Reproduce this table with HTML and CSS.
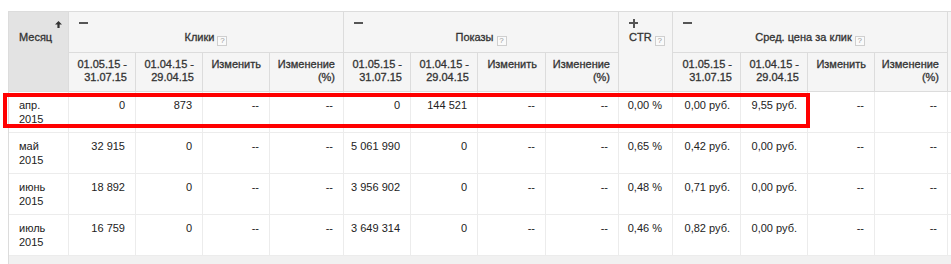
FILE: index.html
```html
<!DOCTYPE html>
<html lang="ru">
<head>
<meta charset="utf-8">
<title>Статистика по месяцам</title>
<link rel="stylesheet" href="styles.css">
</head>
<body>
<div class="wrap">
  <div class="grid">
    <div class="h h-month sorted">
      <svg class="arrow" width="7" height="7" viewBox="0 0 7 7"><path d="M3.5 0 L7 3.6 H4.6 V7 H2.4 V3.6 H0 Z" fill="#333"/></svg>
      <span class="month-label">Месяц</span>
    </div>
    <div class="h h-group g4">
      <span class="tog minus"></span>
      <span class="glabel">Клики<span class="help">?</span></span>
    </div>
    <div class="h h-group g4">
      <span class="tog minus"></span>
      <span class="glabel">Показы<span class="help">?</span></span>
    </div>
    <div class="h h-ctr">
      <span class="tog plus"></span>
      <span class="clabel">CTR<span class="help">?</span></span>
    </div>
    <div class="h h-group g4">
      <span class="tog minus"></span>
      <span class="glabel">Сред. цена за клик<span class="help">?</span></span>
    </div>
    <div class="h h-extra"></div>

    <div class="h sub">01.05.15 - 31.07.15</div>
    <div class="h sub">01.04.15 - 29.04.15</div>
    <div class="h sub">Изменить</div>
    <div class="h sub">Изменение (%)</div>
    <div class="h sub">01.05.15 - 31.07.15</div>
    <div class="h sub">01.04.15 - 29.04.15</div>
    <div class="h sub">Изменить</div>
    <div class="h sub">Изменение (%)</div>
    <div class="h sub">01.05.15 - 31.07.15</div>
    <div class="h sub">01.04.15 - 29.04.15</div>
    <div class="h sub">Изменить</div>
    <div class="h sub">Изменение (%)</div>

    <div class="d m">апр. 2015</div>
    <div class="d">0</div><div class="d">873</div><div class="d">--</div><div class="d">--</div>
    <div class="d">0</div><div class="d">144 521</div><div class="d">--</div><div class="d">--</div>
    <div class="d">0,00 %</div>
    <div class="d">0,00 руб.</div><div class="d">9,55 руб.</div><div class="d">--</div><div class="d">--</div>
    <div class="d x"></div>

    <div class="d m">май 2015</div>
    <div class="d">32 915</div><div class="d">0</div><div class="d">--</div><div class="d">--</div>
    <div class="d">5 061 990</div><div class="d">0</div><div class="d">--</div><div class="d">--</div>
    <div class="d">0,65 %</div>
    <div class="d">0,42 руб.</div><div class="d">0,00 руб.</div><div class="d">--</div><div class="d">--</div>
    <div class="d x"></div>

    <div class="d m">июнь 2015</div>
    <div class="d">18 892</div><div class="d">0</div><div class="d">--</div><div class="d">--</div>
    <div class="d">3 956 902</div><div class="d">0</div><div class="d">--</div><div class="d">--</div>
    <div class="d">0,48 %</div>
    <div class="d">0,71 руб.</div><div class="d">0,00 руб.</div><div class="d">--</div><div class="d">--</div>
    <div class="d x"></div>

    <div class="d m">июль 2015</div>
    <div class="d">16 759</div><div class="d">0</div><div class="d">--</div><div class="d">--</div>
    <div class="d">3 649 314</div><div class="d">0</div><div class="d">--</div><div class="d">--</div>
    <div class="d">0,46 %</div>
    <div class="d">0,82 руб.</div><div class="d">0,00 руб.</div><div class="d">--</div><div class="d">--</div>
    <div class="d x"></div>
  </div>
  <div class="footer"></div>
  <div class="highlight"></div>
</div>
</body>
</html>
```

FILE: styles.css
```css
html, body {
  margin: 0;
  padding: 0;
  background: #fff;
  overflow: hidden;
}
body {
  font-family: "Liberation Sans", Arial, sans-serif;
  font-size: 11px;
  color: #222;
}
.wrap {
  position: relative;
  padding: 11px 0 0 8px;
  width: 1100px;
}
.grid {
  display: grid;
  grid-template-columns: 60px 67px 67px 67px 74px 67px 67px 68px 73px 54px 68px 67px 67px 73px 80px;
  grid-template-rows: 41px 39px 41px 41px 41px 41px;
  border-top: 1px solid #dcdcdc;
  border-left: 1px solid #dcdcdc;
  width: max-content;
}
.grid > div {
  box-sizing: border-box;
  border-right: 1px solid #dcdcdc;
  border-bottom: 1px solid #dcdcdc;
}
.h {
  background: #f5f5f5;
  color: #333;
  font-weight: normal;
  -webkit-text-stroke: 0.3px #333;
  line-height: 13px;
}
.sorted {
  background: #e3e3e3;
}
.h-month {
  grid-row: span 2;
  padding: 9px 6px 0 10px;
  display: flex;
  flex-direction: column;
}
.arrow {
  align-self: flex-end;
  display: block;
}
.month-label {
  margin-top: 2px;
  line-height: 14px;
}
.g4 {
  grid-column: span 4;
}
.h-group {
  padding: 7px 10px 0 10px;
  display: flex;
  flex-direction: column;
}
.h-ctr {
  grid-row: span 2;
  padding: 7px 6px 0 10px;
  display: flex;
  flex-direction: column;
  align-items: flex-start;
}
.h-extra {
  grid-row: span 2;
}
.tog {
  display: block;
  width: 9px;
  height: 9px;
  position: relative;
}
.tog::before {
  content: "";
  position: absolute;
  left: 0;
  top: 3px;
  width: 9px;
  height: 2px;
  background: #555;
}
.plus::after {
  content: "";
  position: absolute;
  left: 3.5px;
  top: 0;
  width: 2px;
  height: 9px;
  background: #555;
}
.glabel {
  margin-top: 3px;
  text-align: center;
  display: block;
}
.clabel {
  margin-top: 3px;
  display: block;
  white-space: nowrap;
}
.help {
  display: inline-block;
  box-sizing: border-box;
  width: 10px;
  height: 10px;
  margin-left: 3px;
  border: 1px solid #cfcfcf;
  background: #fafafa;
  color: #999;
  -webkit-text-stroke: 0;
  font-size: 8px;
  line-height: 8px;
  text-align: center;
  vertical-align: -2px;
}
.sub {
  padding: 5px 8px 0 6px;
  text-align: right;
}
.grid > .d {
  border-right-color: #ececec;
  border-bottom-color: #ececec;
  line-height: 14px;
  padding: 6px 10px 0 6px;
  text-align: right;
  white-space: nowrap;
  background: #fff;
}
.grid > .d.m {
  text-align: left;
  white-space: normal;
  padding-left: 10px;
}
.footer {
  height: 12px;
  background: #f1f1f1;
  border-left: 1px solid #dcdcdc;
  width: 1100px;
}
.highlight {
  position: absolute;
  left: 3px;
  top: 93px;
  width: 807px;
  height: 35px;
  box-sizing: border-box;
  border: 4px solid #ff0000;
  pointer-events: none;
}
```
